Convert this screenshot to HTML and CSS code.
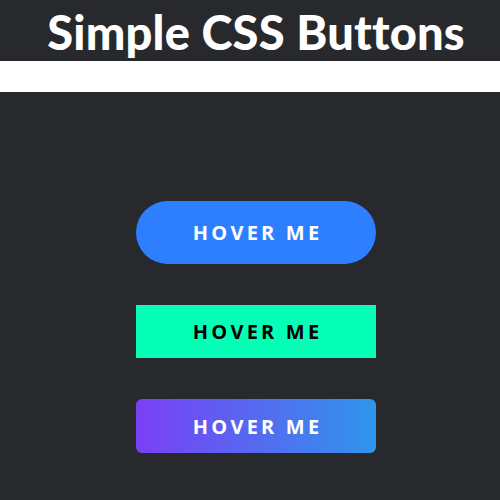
FILE: index.html
```html
<!DOCTYPE html>
<html>
<head>
<meta charset="utf-8">
<link rel="stylesheet" href="styles.css">
</head>
<body>
<h1 class="title">Simple CSS Buttons</h1>
<div class="band"></div>
<main class="buttons">
  <a class="btn btn-pill">HOVER ME</a>
  <a class="btn btn-mint">HOVER ME</a>
  <a class="btn btn-grad">HOVER ME</a>
</main>
</body>
</html>
```
FILE: styles.css
```css
html, body {
  margin: 0;
  padding: 0;
  background: #28292d;
  height: 100%;
}
.title {
  margin: 0;
  height: 61px;
  box-sizing: border-box;
  padding-left: 12px;
  text-align: center;
  font-family: "Lato", sans-serif;
  font-weight: 900;
  font-size: 47px;
  line-height: 64px;
  letter-spacing: 0.2px;
  color: #ffffff;
  overflow: hidden;
}
.band {
  height: 31px;
  background: #ffffff;
}
.buttons {
  display: flex;
  flex-direction: column;
  align-items: center;
  gap: 41px;
  padding-top: 109px;
  padding-left: 12px;
}
.btn {
  width: 240px;
  display: flex;
  align-items: center;
  justify-content: center;
  padding-left: 3.2px;
  font-family: "Open Sans", sans-serif;
  font-weight: 700;
  font-size: 20px;
  letter-spacing: 3.2px;
  color: #ffffff;
  box-sizing: border-box;
}
.btn-pill {
  height: 63px;
  border-radius: 32px;
  background: #2d7fff;
}
.btn-mint {
  height: 53px;
  background: #05ffb7;
  color: #000000;
}
.btn-grad {
  height: 54px;
  border-radius: 6px;
  background: linear-gradient(90deg, #7b3ff5, #2f95ec);
}
```
